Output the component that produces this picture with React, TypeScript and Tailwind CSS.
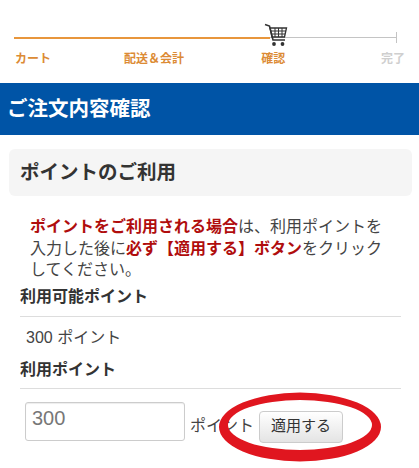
const font = { fontFamily: '"Liberation Sans", "Noto Sans CJK JP", sans-serif' };

function CartIcon() {
  return (
    <svg width="24" height="24" viewBox="0 0 24 24" fill="none" stroke="#333" className="absolute left-[264px] top-[23px]">
      <path d="M1 1.5 L5.5 3 L9 17 H21" strokeWidth="1.6" />
      <path d="M6 5 H22.5 L20.5 14 H8 Z" strokeWidth="1.3" />
      <path d="M6.8 8 H22 M7.5 11 H21 M11 5 V14 M14.5 5 V14 M18 5 V14" strokeWidth="1" />
      <circle cx="10" cy="21" r="1.9" fill="#333" stroke="none" />
      <circle cx="18.5" cy="21" r="1.9" fill="#333" stroke="none" />
    </svg>
  );
}

function Stepper() {
  return (
    <div className="relative h-[83px] pt-[37px] px-[14px]">
      <div className="relative flex h-[2px] w-[383px] items-start">
        <div className="h-[2px] w-[256px] bg-[#e8963c]" />
        <div className="h-px flex-1 bg-[#c4c4c4]" />
        <div className="absolute right-0 top-[-5px] h-[11px] w-px bg-[#c4c4c4]" />
      </div>
      <CartIcon />
      <div className="mt-[12px] flex whitespace-nowrap text-xs font-bold leading-[16px] text-[#dc8b35]">
        <span className="ml-px w-[111px]">カート</span>
        <span className="w-[140px]">配送＆会計</span>
        <span className="w-[122px]">確認</span>
        <span className="text-[#cfcfcf]">完了</span>
      </div>
    </div>
  );
}

export default function App() {
  return (
    <div className="relative h-[468px] w-[419px] overflow-hidden bg-white text-[#333]" style={font}>
      <Stepper />
      <h1 className="flex h-[52px] items-center bg-[#0054a6] pl-[7px] text-[20.5px] font-bold text-white">ご注文内容確認</h1>

      <div className="pl-[9px] pr-[7px] pt-[14px]">
        <h2 className="flex h-[47px] items-center rounded-md bg-[#f5f5f5] pl-[11px] text-[19.5px] font-bold">ポイントのご利用</h2>
      </div>

      <p className="mt-[20px] w-[392px] pl-[30px] text-[16px] leading-[21.5px] text-[#444]">
        <strong className="text-[#b00d0d]">ポイントをご利用される場合</strong>は、利用ポイントを入力した後に
        <strong className="text-[#b00d0d]">必ず【適用する】ボタン</strong>をクリックしてください。
      </p>

      <div className="mx-[20px] mt-[4px] w-[381px]">
        <div className="border-b border-[#ddd] pb-[8px] text-[16px] font-bold leading-[23px]">利用可能ポイント</div>
        <div className="pl-[6px] pt-[10px] text-[16px] leading-[22px] text-[#444]">300 ポイント</div>
        <div className="mt-[9px] border-b border-[#ddd] pb-[7px] text-[16px] font-bold leading-[23px]">利用ポイント</div>

        <div className="mt-[13px] flex items-start pl-[5px]">
          <input
            readOnly
            value="300"
            className="h-[39px] w-[160px] rounded-[3px] border border-[#ccc] pb-[5px] pl-[6px] text-[20px] text-[#777] shadow-[inset_0_1px_1px_rgba(0,0,0,0.075)] outline-none"
          />
          <span className="ml-[5px] mt-[13px] w-[69px] text-[16px] leading-[22px] text-[#444]">ポイント</span>
          <button className="mt-[9px] h-[32px] w-[84px] rounded-[4px] border border-[#ccc] bg-gradient-to-b from-white to-[#e4e4e4] text-[15px] text-[#333]">適用する</button>
        </div>
      </div>

      <svg width="419" height="468" className="pointer-events-none absolute left-0 top-0">
        <path
          fillRule="evenodd"
          fill="#e0161f"
          d="M219 427 A81 34.5 0 1 1 381 427 A81 34.5 0 1 1 219 427 Z M228 425 A72 25 0 1 0 372 425 A72 25 0 1 0 228 425 Z"
        />
      </svg>
    </div>
  );
}
